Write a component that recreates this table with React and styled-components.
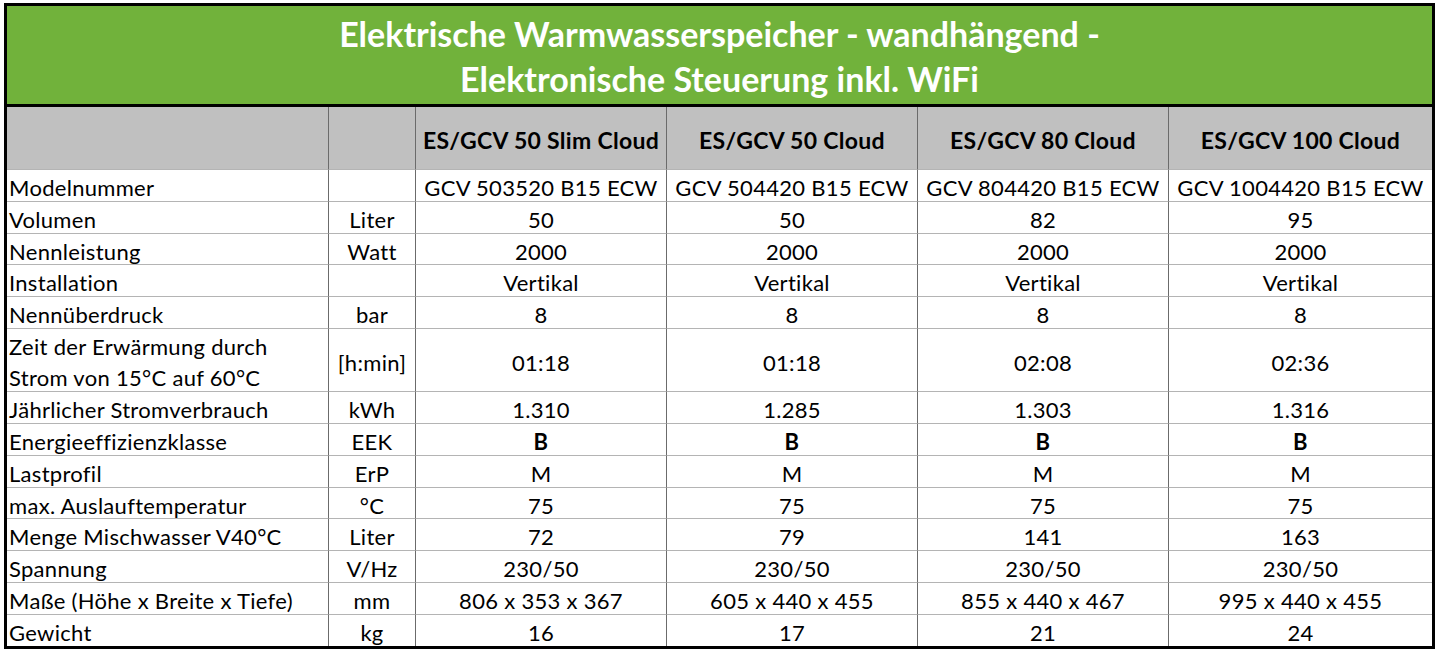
import React from 'react';
import styled, { createGlobalStyle } from 'styled-components';

const GlobalStyle = createGlobalStyle`
  html, body {
    margin: 0;
    padding: 0;
    background: #fff;
  }
  body {
    font-family: Lato, 'Liberation Sans', sans-serif;
    color: #000;
  }
`;

const Page = styled.div`
  padding: 3px 0 0 4px;
`;

const Frame = styled.div`
  width: 1425px;
  border: 3px solid #000;
`;

const Title = styled.div`
  height: 101px;
  background: #71b23b;
  border-bottom: 3px solid #000;
  display: flex;
  flex-direction: column;
  align-items: center;
  justify-content: center;
  color: #fff;
  font-weight: 700;
  font-size: 34px;
  line-height: 45px;
  padding: 2px 0 0 0;
  box-sizing: border-box;
`;

const Grid = styled.div`
  display: grid;
  grid-template-columns: 322px 87px 251px 251px 251px 263px;
  grid-template-rows: ${p => p.rows.map(r => `${r}px`).join(' ')};
`;

const Cell = styled.div`
  display: flex;
  align-items: center;
  justify-content: ${p => (p.left ? 'flex-start' : 'center')};
  padding: ${p => (p.left ? '4px 0 0 2px' : '4px 0 0 0')};
  box-sizing: border-box;
  border-right: ${p => (p.last ? 'none' : '1px solid #6b6b6b')};
  border-bottom: ${p => (p.bottom ? 'none' : '1px solid #b4b4b4')};
  background: ${p => (p.head ? '#c0c0c0' : '#fff')};
  font-size: ${p => (p.head ? '23px' : '22px')};
  letter-spacing: ${p => (p.head ? '0.3px' : '0.3px')};
  font-weight: ${p => (p.bold ? 700 : 400)};
  line-height: 31px;
  white-space: nowrap;
`;

const models = [
  'ES/GCV 50 Slim Cloud',
  'ES/GCV 50 Cloud',
  'ES/GCV 80 Cloud',
  'ES/GCV 100 Cloud',
];

const specs = [
  { label: 'Modelnummer', unit: '', values: ['GCV 503520 B15 ECW', 'GCV 504420 B15 ECW', 'GCV 804420 B15 ECW', 'GCV 1004420 B15 ECW'], h: 32 },
  { label: 'Volumen', unit: 'Liter', values: ['50', '50', '82', '95'], h: 32 },
  { label: 'Nennleistung', unit: 'Watt', values: ['2000', '2000', '2000', '2000'], h: 31 },
  { label: 'Installation', unit: '', values: ['Vertikal', 'Vertikal', 'Vertikal', 'Vertikal'], h: 32 },
  { label: 'Nennüberdruck', unit: 'bar', values: ['8', '8', '8', '8'], h: 32 },
  { label: ['Zeit der Erwärmung durch', 'Strom von 15°C auf 60°C'], unit: '[h:min]', values: ['01:18', '01:18', '02:08', '02:36'], h: 63 },
  { label: 'Jährlicher Stromverbrauch', unit: 'kWh', values: ['1.310', '1.285', '1.303', '1.316'], h: 32 },
  { label: 'Energieeffizienzklasse', unit: 'EEK', values: ['B', 'B', 'B', 'B'], h: 32, bold: true },
  { label: 'Lastprofil', unit: 'ErP', values: ['M', 'M', 'M', 'M'], h: 32 },
  { label: 'max. Auslauftemperatur', unit: '°C', values: ['75', '75', '75', '75'], h: 31 },
  { label: 'Menge Mischwasser V40°C', unit: 'Liter', values: ['72', '79', '141', '163'], h: 32 },
  { label: 'Spannung', unit: 'V/Hz', values: ['230/50', '230/50', '230/50', '230/50'], h: 32 },
  { label: 'Maße (Höhe x Breite x Tiefe)', unit: 'mm', values: ['806 x 353 x 367', '605 x 440 x 455', '855 x 440 x 467', '995 x 440 x 455'], h: 32 },
  { label: 'Gewicht', unit: 'kg', values: ['16', '17', '21', '24'], h: 31 },
];

const LabelLines = styled.div`
  display: flex;
  flex-direction: column;
  line-height: 31px;
`;

const App = () => {
  const rows = [63, ...specs.map(s => s.h)];
  return (
    <Page>
      <GlobalStyle />
      <Frame>
        <Title>
          <span>Elektrische Warmwasserspeicher - wandhängend -</span>
          <span>Elektronische Steuerung inkl. WiFi</span>
        </Title>
        <Grid rows={rows}>
          <Cell head />
          <Cell head />
          {models.map((m, i) => (
            <Cell head bold key={m} last={i === models.length - 1}>
              {m}
            </Cell>
          ))}
          {specs.map((s, r) => {
            const bottom = r === specs.length - 1;
            return (
              <React.Fragment key={r}>
                <Cell left bottom={bottom}>
                  {Array.isArray(s.label) ? (
                    <LabelLines>
                      {s.label.map(l => (
                        <span key={l}>{l}</span>
                      ))}
                    </LabelLines>
                  ) : (
                    s.label
                  )}
                </Cell>
                <Cell bottom={bottom}>{s.unit}</Cell>
                {s.values.map((v, i) => (
                  <Cell key={i} bottom={bottom} bold={s.bold} last={i === s.values.length - 1}>
                    {v}
                  </Cell>
                ))}
              </React.Fragment>
            );
          })}
        </Grid>
      </Frame>
    </Page>
  );
};

export default App;
